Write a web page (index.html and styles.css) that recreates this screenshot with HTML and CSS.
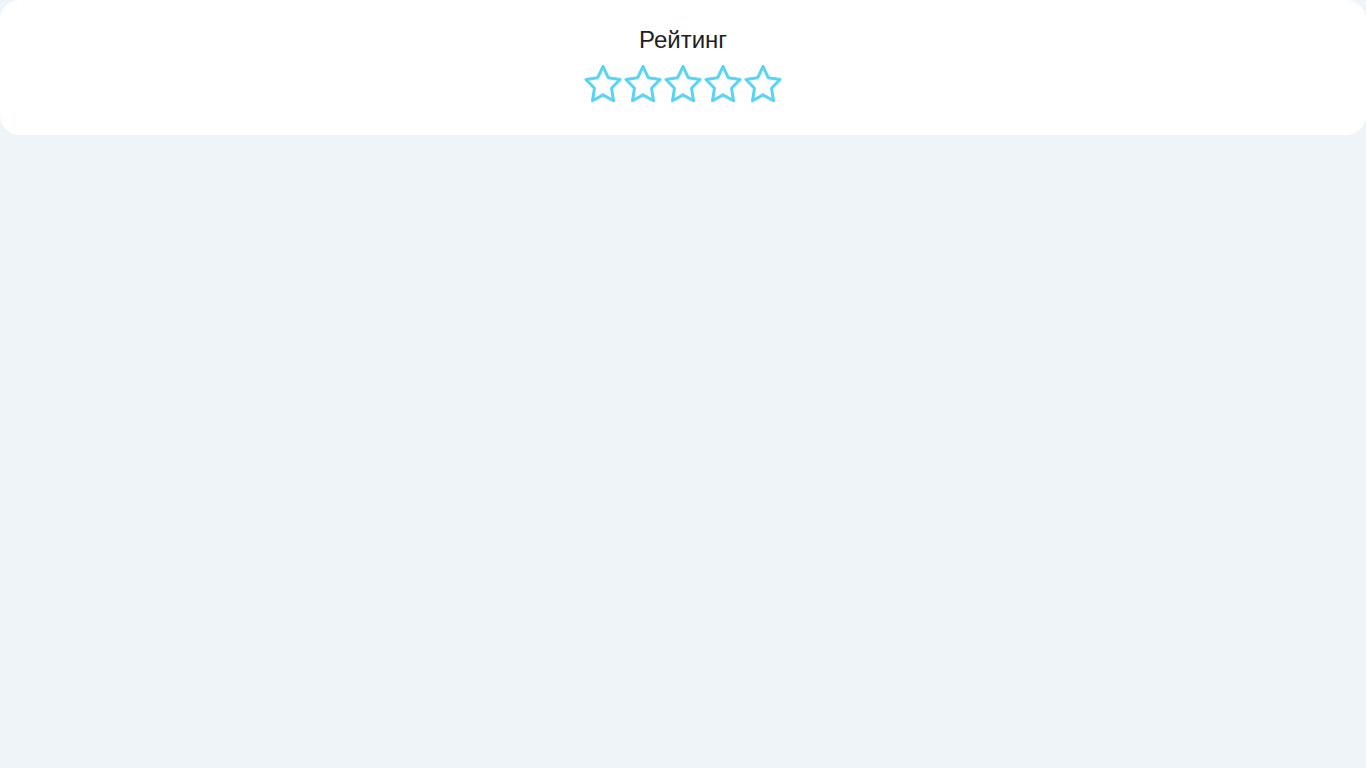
FILE: index.html
```html
<!DOCTYPE html>
<html lang="ru">
<head>
<meta charset="utf-8">
<title>Рейтинг</title>
<link rel="stylesheet" href="styles.css">
</head>
<body>
<section class="card">
  <h1 class="title">Рейтинг</h1>
  <div class="stars">
    <svg class="star" viewBox="0.25 1.2 23.5 22.2" preserveAspectRatio="none"><polygon points="12 2 15.09 8.26 22 9.27 17 14.14 18.18 21.02 12 17.77 5.82 21.02 7 14.14 2 9.27 8.91 8.26 12 2"/></svg>
    <svg class="star" viewBox="0.25 1.2 23.5 22.2" preserveAspectRatio="none"><polygon points="12 2 15.09 8.26 22 9.27 17 14.14 18.18 21.02 12 17.77 5.82 21.02 7 14.14 2 9.27 8.91 8.26 12 2"/></svg>
    <svg class="star" viewBox="0.25 1.2 23.5 22.2" preserveAspectRatio="none"><polygon points="12 2 15.09 8.26 22 9.27 17 14.14 18.18 21.02 12 17.77 5.82 21.02 7 14.14 2 9.27 8.91 8.26 12 2"/></svg>
    <svg class="star" viewBox="0.25 1.2 23.5 22.2" preserveAspectRatio="none"><polygon points="12 2 15.09 8.26 22 9.27 17 14.14 18.18 21.02 12 17.77 5.82 21.02 7 14.14 2 9.27 8.91 8.26 12 2"/></svg>
    <svg class="star" viewBox="0.25 1.2 23.5 22.2" preserveAspectRatio="none"><polygon points="12 2 15.09 8.26 22 9.27 17 14.14 18.18 21.02 12 17.77 5.82 21.02 7 14.14 2 9.27 8.91 8.26 12 2"/></svg>
  </div>
</section>
</body>
</html>
```
FILE: styles.css
```css
html, body {
  margin: 0;
  padding: 0;
  background: #eef4f7;
  font-family: "Liberation Sans", Arial, sans-serif;
}
.card {
  background: #ffffff;
  border-radius: 20px;
  padding: 26px 0 30px;
  display: flex;
  flex-direction: column;
  align-items: center;
}
.title {
  margin: 0;
  font-size: 24px;
  line-height: 28px;
  font-weight: 400;
  color: #1d2125;
}
.stars {
  margin-top: 11px;
  display: flex;
  height: 40px;
}
.star {
  width: 40px;
  height: 40px;
  display: block;
  fill: none;
  stroke: #5ad4f4;
  stroke-width: 3px;
  stroke-linejoin: round;
  stroke-linecap: round;
}
.star polygon {
  vector-effect: non-scaling-stroke;
}
```
